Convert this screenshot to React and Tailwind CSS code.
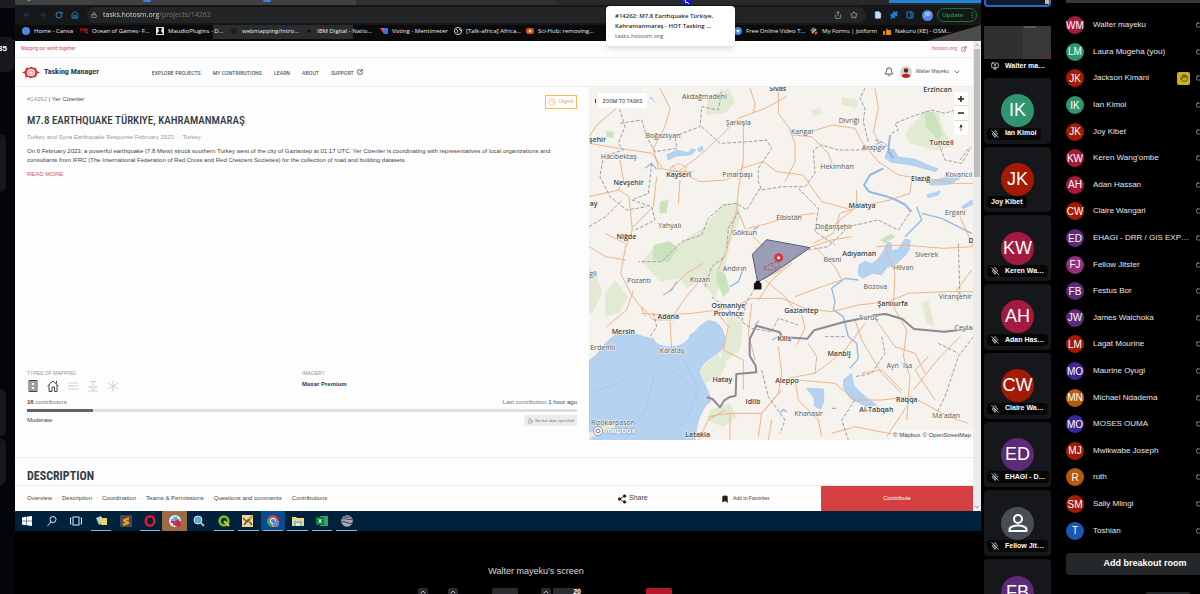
import React from "react";
import {
  ArrowLeft, ArrowRight, RotateCw, House, Lock, Share, Star, FileText, Puzzle, PanelRight,
  EllipsisVertical, ExternalLink, Bell, ChevronDown, ChevronUp, Clock, Timer, Share2, Bookmark,
  MicOff, Hand, Video, SquareArrowOutUpRight, MonitorUp, Asterisk, Waves,
} from "lucide-react";

const NARROW = "font-['Roboto_Condensed','Liberation_Sans_Narrow','Liberation_Sans',sans-serif]";

const colors = {
  crimson: "bg-[#a3193f]",
  green: "bg-[#2f9470]",
  red: "bg-[#a31a05]",
  purple: "bg-[#5c2a77]",
  magenta: "bg-[#95307a]",
  indigo: "bg-[#3d2699]",
  orange: "bg-[#b85a0c]",
  blue: "bg-[#1d55b3]",
};

const participants = [
  ["WM", "Walter mayeku", "crimson"],
  ["LM", "Laura Mugeha (you)", "green"],
  ["JK", "Jackson Kimani", "red", true],
  ["IK", "Ian Kimoi", "green"],
  ["JK", "Joy Kibet", "red"],
  ["KW", "Keren Wang'ombe", "crimson"],
  ["AH", "Adan Hassan", "crimson"],
  ["CW", "Claire Wangari", "red"],
  ["ED", "EHAGI - DRR / GIS EXP…", "purple"],
  ["FJ", "Fellow Jitster", "magenta"],
  ["FB", "Festus Bor", "purple"],
  ["JW", "James Waichoka", "purple"],
  ["LM", "Lagat Mourine", "red"],
  ["MO", "Maurine Oyugi", "indigo"],
  ["MN", "Michael Ndadema", "orange"],
  ["MO", "MOSES OUMA", "indigo"],
  ["MJ", "Mwikwabe Joseph", "red"],
  ["R", "ruth", "orange"],
  ["SM", "Sally Mlingi", "red"],
  ["T", "Toshian", "blue"],
];

const tiles = [
  ["IK", "Ian Kimoi", "green", true],
  ["JK", "Joy Kibet", "red", false],
  ["KW", "Keren Wa…", "crimson", true],
  ["AH", "Adan Has…", "crimson", true],
  ["CW", "Claire Wa…", "red", true],
  ["ED", "EHAGI - D…", "purple", true],
  [null, "Fellow Jit…", null, true],
];

function Tile({ initials, name, color, muted }) {
  return (
    <div className="relative flex items-center justify-center rounded-sm bg-[#15171a]">
      {initials ? (
        <span className={`flex size-[33px] items-center justify-center rounded-full text-[18px] text-white ${colors[color]}`}>
          {initials}
        </span>
      ) : (
        <span className="flex size-[33px] items-center justify-center rounded-full bg-[#484f54]">
          <svg viewBox="0 0 24 24" className="size-6 fill-none stroke-white stroke-2">
            <circle cx="12" cy="8" r="4" />
            <path d="M3.500 20v-1.500c0-2.700 5-4 8.500-4s8.500 1.300 8.500 4V20z" />
          </svg>
        </span>
      )}
      {name && (
        <span className="absolute bottom-1 left-[3px] flex h-3 items-center gap-1 whitespace-nowrap rounded-sm bg-black/70 px-1 text-[7px] font-bold text-white">
          {muted && <MicOff className="mr-0.5 size-2 shrink-0" />}
          {name}
        </span>
      )}
    </div>
  );
}

function Filmstrip() {
  return (
    <aside className="flex w-[67px] shrink-0 flex-col">
      <div className="relative mb-[3px] h-[7px] shrink-0 rounded-b-sm border-2 border-t-0 border-[#2a66d0] bg-[#121a2b]">
        <span className="absolute right-0 top-0 h-1 w-1 bg-[#c9bd8a]" />
      </div>
      <div className="mb-[2px] flex h-[66px] shrink-0 flex-col">
        <div className="h-4 bg-black" />
        <div className="relative flex h-[33px] bg-[#303030]">
          <span className="w-10" />
          <span className="w-7 bg-[#383836]" />
          <span className="absolute left-10 top-0 h-[2px] w-3 bg-[#5b5b5b]" />
          <span className="absolute bottom-0 right-0 h-[2px] w-3 bg-[#5c2c2c]" />
        </div>
        <div className="flex h-[14px] items-center gap-1 whitespace-nowrap pl-[7px] text-[7px] font-bold text-white">
          <MonitorUp className="mr-0.5 size-2 shrink-0" />
          Walter ma…
        </div>
      </div>
      <div className="grid h-[478px] shrink-0 grid-rows-7 gap-[3px]">
        {tiles.map(([i, n, c, m]) => (
          <Tile key={n} initials={i} name={n} color={c} muted={m} />
        ))}
      </div>
      <div className="mt-[3px] grid h-[66px] shrink-0">
        <Tile initials="FB" color="purple" />
      </div>
    </aside>
  );
}

function Participants() {
  return (
    <aside className="flex w-[134px] shrink-0 flex-col overflow-hidden">
      <div className="h-[3px] shrink-0 bg-[#37383b]" />
      <ul className="mt-[9px] grid h-[532px] shrink-0 auto-rows-fr">
        {participants.map(([i, n, c, hand]) => (
          <li key={n} className="flex items-center">
            <span className={`flex size-[18px] shrink-0 items-center justify-center rounded-full text-[10px] text-white ${colors[c]}`}>{i}</span>
            <span className="ml-[9px] w-[94px] shrink-0 whitespace-nowrap text-[8px] text-[#e6e6e6]">{n}</span>
            <span className="-ml-2.5 flex w-3 shrink-0">
              {hand && (
                <span className="flex size-[13px] shrink-0 items-center justify-center rounded-xs bg-[#cbb01c]">
                  <Hand className="size-2 text-[#3a3206]" />
                </span>
              )}
            </span>
            <Video className="ml-[7px] size-2 shrink-0 text-[#b5b5b5]" />
          </li>
        ))}
      </ul>
      <button className="mt-[9px] h-[22px] w-[158px] shrink-0 rounded-sm bg-[#25282b] text-[9px] font-bold text-white">
        Add breakout room
      </button>
      <div className="ml-20 mt-auto h-[2px] w-11 shrink-0 rounded-t bg-[#25282b]" />
    </aside>
  );
}

const bookmarks = [
  ["Home - Canva", <circle key="a" cx="4" cy="4" r="4" fill="#4a8be8" />, "w-[58px]"],
  ["Ocean of Games- F…", <path key="a" d="M0 6V2h2l1 2V2h2v4M6 2h2v4H6z" fill="none" stroke="#c01818" />, "w-[76px]"],
  ["MaudioPlugins - D…", <path key="a" d="M0 0h8v8H0zM2 1l4 0-1 3 2 3H1l2-3z" fill="#dfe5ea" fillRule="evenodd" />, "w-[74px]"],
  ["webmapping/Intro…", <circle key="a" cx="4" cy="4" r="3" fill="#1c1c1c" />, "w-[75px]"],
  ["IBM Digital - Natio…", <circle key="a" cx="4" cy="4" r="2" fill="#151515" />, "w-[75px]"],
  ["Voting - Mentimeter", <g key="a"><path d="M0 1l4 6V1z" fill="#e0457c" /><path d="M4 1h4v6L4 7z" fill="#3f6fe0" /></g>, "w-[74px]"],
  ["[Talk-africa] Africa…", <g key="a"><circle cx="4" cy="4" r="3.600" fill="none" stroke="#cfcfcf" /><path d="M2 2l2 2-1 2M5 2l2 2" stroke="#cfcfcf" fill="none" /></g>, "w-[72px]"],
  ["Sci-Hub: removing…", <g key="a"><rect y="1" width="8" height="6" rx="2" fill="#d44a16" /><circle cx="4" cy="4" r="1.500" fill="#fbe08a" /></g>, "w-[72px]"],
];
const bookmarksRight = [
  ["Free Online Video T…", <g key="a"><circle cx="4" cy="4" r="4" fill="#3b82e8" /><path d="M2 3h4L4 6z" fill="#fff" /></g>, "w-[76px]"],
  ["My Forms | Jotform", <g key="a"><path d="M1 4l3-3" stroke="#3f8cf0" strokeWidth="2" /><path d="M2 6l4-4" stroke="#f5a623" strokeWidth="2" /><path d="M5 7l2-2" stroke="#e4572e" strokeWidth="2" /></g>, "w-[73px]"],
  ["Nakuru (KE) - OSM…", <path key="a" d="M0 4h2v4H0zM3 4l1-3 1 2h3v5H3z" fill="#e58a1a" />, "w-[76px]"],
];

function BookmarkLink({ item }) {
  const [label, icon, w] = item;
  return (
    <a href="#bookmark" className={`flex shrink-0 items-center gap-1 whitespace-nowrap ${w}`}>
      <svg viewBox="0 0 8 8" className="size-2 shrink-0">{icon}</svg>
      {label}
    </a>
  );
}

function BrowserChrome() {
  return (
    <header className="relative flex h-[41px] shrink-0 flex-col overflow-visible bg-[#0b0b0c] font-['Open_Sans',sans-serif]">
      <div className="flex h-[5px] shrink-0 bg-[#28292b]">
        <div className="flex w-[341px] gap-28 bg-[#404143] pl-3">
          <span className="h-px w-1 rounded-b bg-[#5e9b4b]" />
          <span className="h-0.5 w-2 rounded-b bg-[#3c7fe6]" />
          <span className="h-0.5 w-2 rounded-b bg-[#3c7fe6]" />
        </div>
        <div className="w-[200px] bg-[#303133]" />
        <div className="flex-1" />
        <div className="h-[3px] w-[92px] bg-[#2084d8]" />
      </div>
      <div className="flex h-5 shrink-0 items-center bg-[#161718] pl-2 pr-1 text-[#2c82bd]">
        <div className="flex gap-2">
          <button aria-label="Back"><ArrowLeft className="size-2 text-[#1c577f]" /></button>
          <button aria-label="Forward"><ArrowRight className="size-2 text-[#1c577f]" /></button>
          <button aria-label="Reload"><RotateCw className="size-2" strokeWidth={3} /></button>
          <button aria-label="Home page"><House className="size-2" strokeWidth={3} /></button>
        </div>
        <div className="ml-2 flex h-4 flex-1 items-center rounded-full bg-[#232426] px-1">
          <Lock className="size-[6px] shrink-0 text-[#cfcfcf]" />
          <input
            aria-label="Address"
            defaultValue="tasks.hotosm.org/projects/14262"
            className="ml-1.5 min-w-0 flex-1 bg-[linear-gradient(to_right,#ececec_56px,#7a7a7a_56px)] bg-clip-text text-[7px] text-transparent outline-none"
          />
          <Share className="size-2 text-[#b5b5b5]" />
          <Star className="ml-2 mr-1 size-2 text-[#c9c9c9]" />
        </div>
        <FileText className="ml-2 size-2 fill-[#bfdcf8] text-[#bfdcf8]" />
        <Puzzle className="ml-2 size-2 fill-[#2084d8] text-[#2084d8]" />
        <PanelRight className="ml-2 size-2 text-[#2084d8]" strokeWidth={3} />
        <span className="ml-2 flex size-[11px] items-center justify-center rounded-full bg-[#5784e6] text-[5px] text-white">JW</span>
        <button className="ml-1 flex h-[14px] w-10 items-center justify-between rounded-full border border-[#157a2c] pl-1 text-[6px] font-semibold text-[#269a3f]">
          Update
          <EllipsisVertical className="size-2" />
        </button>
      </div>
      <nav className="relative flex flex-1 items-center pb-1 pl-[7px] text-[6px] font-medium text-[#ececec]">
        <span className="absolute left-[198px] top-0 h-3.5 w-[140px] bg-[#2b2c2d]" />
        <svg viewBox="0 0 54 16" className="absolute right-0 top-0 h-4 w-[54px]"><path d="M54 0v16H0z" fill="#4b4b4c" /></svg>
        <div className="relative flex flex-1 items-center">
          {bookmarks.map((b) => <BookmarkLink key={b[0]} item={b} />)}
        </div>
        <div className="relative flex items-center pr-[22px]">
          {bookmarksRight.map((b) => <BookmarkLink key={b[0]} item={b} />)}
        </div>
      </nav>
      <div className="absolute left-[591px] top-1.5 z-10 flex h-10 w-[129px] flex-col justify-center rounded-[4px] bg-white pl-[9px] text-[6px] leading-[10px] text-[#2c2c2c] shadow-md">
        <span className="font-semibold">#14262: M7.8 Earthquake Türkiye,</span>
        <span className="font-semibold">Kahramanmaraş - HOT Tasking …</span>
        <span className="text-[#555]">tasks.hotosm.org</span>
      </div>
      <svg viewBox="0 0 12 6" className="absolute left-[666px] top-0 z-10 h-1.5 w-3">
        <ellipse cx="6" cy="1" rx="5" ry="4" fill="#1616d8" />
        <path d="M4 0l1 3 1-1 2 2" stroke="#fff" fill="none" />
      </svg>
    </header>
  );
}

const major = [
  ["Sivas", 578, 34], ["Erzincan", 1058, 35], ["Tunceli", 1070, 195], ["şehir", 38, 186], ["Kayseri", 281, 291],
  ["Nevşehir", 131, 315], ["Elazığ", 1007, 303], ["Malatya", 831, 385], ["Niğde", 124, 477], ["ay", 26, 379],
  ["Adıyaman", 823, 529], ["Şanlıurfa", 923, 678], ["Osmaniye", 430, 683], ["Province", 430, 708],
  ["Gaziantep", 649, 699], ["Adana", 250, 718], ["Mersin", 115, 763], ["Kilis", 598, 782], ["Manbij", 762, 828],
  ["Hatay", 412, 906], ["Aleppo", 606, 908], ["Idlib", 504, 972], ["Al-Tabqah", 874, 996], ["Raqqa", 965, 967],
  ["Latakia", 338, 1070], ["D", 1158, 490],
];
const minor = [
  ["Akdağmadeni", 358, 56], ["Şarkışla", 460, 135], ["Kangal", 651, 163], ["Divriği", 792, 129], ["Arapgir", 866, 211],
  ["Boğazlıyan", 234, 174], ["Hacıbektaş", 101, 236], ["Pınarbaşı", 457, 291], ["Hekimhan", 756, 268],
  ["Kovancıl", 1121, 291], ["Ergani", 1111, 404], ["Elbistan", 612, 420], ["Doğanşehir", 747, 446],
  ["Göksun", 478, 464], ["Yahyalı", 254, 445], ["Siverek", 1025, 530], ["Besni", 742, 546], ["Andırın", 449, 573],
  ["Hilvan", 955, 571], ["Pozantı", 162, 610], ["gli", 24, 588], ["Kozan", 345, 605], ["Bozova", 871, 626],
  ["Viranşehir", 1111, 657], ["Suruç", 851, 720], ["Ceyla", 1135, 751], ["Erdemli", 53, 810], ["Karataş", 261, 819],
  ["Ayn ʿIsa", 943, 863], ["Khanasir", 671, 1008], ["Ma'adan", 1083, 1014], ["Rizokarpason", 84, 1036],
];

function MapDrawing() {
  return (
    <svg viewBox="12 21 1152 1059" preserveAspectRatio="xMidYMid slice" className="absolute inset-0 size-full font-['Open_Sans',sans-serif]">
      <rect x="-400" y="-400" width="2000" height="2000" fill="#f6f3ee" />
      <g fill="#e3ead4">
        <path d="M370 50l60-25 20 40-30 35-60 5z" />
        <path d="M770 50l50 10-5 25-45-10zM680 90l25-8 5 20-25 5z" />
        <path d="M960 160l60-70 40 10 20 60 25 40-60 10-70-20z" />
        <path d="M170 545l50-55 60 5 30-25 50-30 50-65 50-10 5 50-30 80-20 90-25 70-25-30-20-20-40 20-20-30-60 10z" />
        <path d="M12 560l20 20 20 60-30 60H12zM60 640l30-40 40 50-30 50-40 10z" />
        <path d="M425 700l50 30-10 80-50 40-10-40 25-50z" />
        <path d="M375 990l60-20 20 40-40 30-50-20zM345 870l50-50 30 30-20 40-45 20z" />
        <path d="M1010 670l20-10 20 80-25-10z" />
      </g>
      <g fill="#cbe3bd">
        <path d="M1018 95l30 0 25 70-15 15-35-40z" />
        <path d="M205 495l50-12 25 25-30 40-45-10z" />
        <path d="M225 365l25-6-5 40-22 0z" />
        <path d="M62 152l25 5-2 18-20-4z" />
        <path d="M885 480l35-20 10 12-30 18z" />
        <path d="M395 570l25 10 15 50-20 20-20-40z" />
      </g>
      <g fill="#b5d3f1" stroke="#a3c6ea" strokeWidth="2">
        <path d="M12 842C50 820 60 775 100 762C140 750 160 770 205 776C215 800 240 798 255 802C280 800 310 790 315 765C335 755 340 735 370 722C400 722 415 745 420 775C415 810 400 820 385 828C360 845 345 860 343 875C350 900 370 925 378 962C350 985 335 1020 330 1085H12z" />
        <path d="M245 225l30-15 35 8 10-12 12 4-12 14-45 4-25 12zM338 205l14-6 2 12-12 4z" />
        <path d="M905 215l20-8 15 25 50 5 30 15 40 15-10 8-70-20-60-8-20-12z" />
        <path d="M1030 305l50-12 45 2-30 18-60 2zM1025 345l40-12-5 12-30 8z" />
        <path d="M1130 380l30-20 4 12-30 14z" />
        <path d="M822 555l18-12 20 8 20-14 20-32 8-18 12 2-2 24 22-6 20-30 16 4-4 30-14 18-30 28-22 4-16 24-26-6-30 16-14-10z" />
        <path d="M665 925l50 2 2 35-10 25-18-8-2-25z" />
        <path d="M775 900l25-20 5 35 30 30 40 30-30 5-50-25-18-30z" />
      </g>
      <path d="M112 1025l-30 22-60 24-10 9V1058l40-18z" fill="#e9eddb" />
      <path d="M280 800l60 130-30 80-60 70M200 820l60 50 60 50M12 940l90-30 60-60M120 1080l60-90 30-110" fill="none" stroke="#9fc3e6" strokeWidth="2" />
      <g fill="none" stroke="#8fb9e6" strokeWidth="4" strokeLinejoin="round">
        <path d="M915 165l-5 50 15 20M895 265l-40 20-18 30 15 20 45 12 30 10 35 18 15 20" strokeWidth="6" />
        <path d="M995 380l15 40-30 30-20 20M1010 400l60 15 60 30 30 15" />
        <path d="M820 600l-40-5-40 30 10 40-5 25 30 20 15 60 25 20 5 45-25 30" />
        <path d="M180 265l20-15 15 18M435 620l25-15 15-40M235 645l25-15 15-25M520 440l-15 10" />
        <path d="M510 735l12-12M560 780l30-15M585 1000l10-12 10 8M740 985h14" />
      </g>
      <g fill="none" stroke="#efb389" strokeWidth="3" strokeLinejoin="round">
        <path d="M12 170L40 130L95 85M225 25l30 60-15 55-35 65 15 60 60 10 60-45 60-55 60-60 80-30 65-35" />
        <path d="M495 25l15 45-5 30M580 25l0 75 30 40 20 50 0 55-30 60M475 140l0 100-15 90-5 60-30 120-25 60" />
        <path d="M12 190l90 15 100 15 30 45M285 275l60 30 80-5 45-35 65-20 40 30 80 10 20 30 35 50 75 20 60-15" />
        <path d="M620 165l60 5 50 50 10 30M680 155l60-20 70 10 20 40 50 60 60 40 60 10 60 5 40 10 70 0 55-30" />
        <path d="M870 25l10 60-15 70 25 45M980 300l-5 40-60 20-90 20-60 20-20 60-60 30" />
        <path d="M12 350l90-20 30 20 10 100-20 50-15 80 30 60 30 40 15 30M105 240l10 60-15 30M215 290l-10 90-60 60" />
        <path d="M60 460l60 30M12 500l50 30 60 10M285 300l-5 70M460 395l20 50 60 60" />
        <path d="M690 400l-80 10-60 20-60 15M815 330v50l-50 40-20 30M530 600l60-30 60-60 90-30 60-10" />
        <path d="M690 500l60 60 20 40-60 20-80 30M1125 410l40 90-90 5-120-10-80 5M900 500l30 80-5 100 40 70-10 80 20 60-10 130" />
        <path d="M170 700l70 5 80-5 80-10 70-20 30-15 90 0 70 30 80 10 80-20 90-10 60-25 110-5 100 0 80 10" />
        <path d="M245 640l60-60 50-30M270 700l30-45 50-60M255 725l5 80M145 630l-20 60-60 50M170 680l35 40 60 0" />
        <path d="M400 700l30 40-15 70 60 30 0 90M500 670l-10 90 20 80M580 800l10 80-10 60-50 60-100 0-60 10" />
        <path d="M650 705l10 40-25 50M690 880l40-30 50-40 60-80M690 880l-30 5-50 10M670 790l25 40-5 50M630 900l10 60 60 60 10 50" />
        <path d="M640 900l110 10 60 50 80 0 90-10 110 60 60 20M810 720l20 60 60 100 60 60M880 730l50 70 60 20 30 60M1125 770l-60 60-80 100" />
        <path d="M590 930l-60 70-10 70M560 1020l-10 60M340 1080l30-60 50-30M435 1000l0 80M1130 650l-15-20 45-60M830 880l60-10 60 60M1050 960l-60-90 40-40" />
        <path d="M740 1060l70-20 100 20 60 0M965 980l-60 90M520 660l40-60 60-50M540 600l60 50 30 40" />
      </g>
      <g fill="none" stroke="#e89c6a" strokeWidth="2"><path d="M255 265l25-15 25 12-10 20-30 5zM265 275h60M262 255l30 40" /></g>
      <g fill="none" stroke="#a09ca8" strokeWidth="3" strokeDasharray="11 5">
        <path d="M60 40l45 50 15 50-20 50 15 20-60 20-10 60 30 60 50 40 60-10M105 130l65-10 15 50 25 45 65-10-5-40M265 170l80-30 5-60 50 10 10-60" />
        <path d="M350 140l55 50 90-5 50-5 15 25-40 60 0 40 10 25 60-10 70 0 30-40-5-70 25-15 50 15 80 0 50-25" />
        <path d="M850 185l-15-60 5-40-15-30 15-30M870 180l30 10 20 30M1060 190l20 50 50 10 30-50M1125 240l30-40M920 160l20-10-10-20 50-20 60-20 40 10 60-20" />
        <path d="M525 325l-40 65-30-20-40 5-45 40-20 50-60 20-60 60-70 0M200 250l-10 90-50 20 60 20 10 40-60 30" />
        <path d="M12 440l50-30 50-50M640 325l60 60-10 70 60 40M670 510l60-10 60-60 90-20 60 30 40-60M460 395l-30 50-5 60" />
        <path d="M360 620l20-60 40-30M510 625l-25 40-15 60 30 20 60 10 20-40 60 20M1120 490l5 160M205 700l10 40-20 30M380 650l90 70" />
        <path d="M720 770l60 0M890 770l10 50-40 60-50 10M1165 770l-45 60-40 120-30 60M1060 790l60 30M530 870l20 80 50 70-15 40M810 960l-40 60 20 60" />
      </g>
      <path d="M365 962l18 5 22 25 12-20 15-10 20-5 2-65 60-5-2-20-18-30 0-50 15-30 5-10 70 20 8 14 75 5 20-25 90-25 60-12 30-8 35-4 50 15 35 30 90 8 90-10 50-10" fill="none" stroke="#8d8894" strokeWidth="6" strokeLinejoin="round" transform="translate(0 -10)" />
      <path d="M545 479l130 24-95 66-62 38-16-84z" fill="#7c80a0" fillOpacity=".75" stroke="#57587c" strokeWidth="3" />
      <g stroke="#9a9ebb" strokeWidth="1">
        {Array.from({ length: 8 }, (_, i) => <path key={i} d={`M${515 + i * 16} ${500 + i}V${590 - i * 9}`} />)}
      </g>
      <g fill="none" stroke="#c0405e" strokeWidth="3" strokeDasharray="6 4"><path d="M540 560l35-15 10 12-20 14-30-4zM555 548l20 20" /></g>
      <circle cx="581" cy="533" r="9" fill="#fff" stroke="#d8363f" strokeWidth="9" />
      <path d="M508 610h20v17h-20zM513 610v-6h10v6" fill="#111" stroke="#111" strokeWidth="3" />
      <g textAnchor="middle" fontSize="21" fill="#565656" stroke="#f8f6f2" strokeWidth="3" paintOrder="stroke">
        {minor.map(([t, x, y]) => <text key={t} x={x} y={y}>{t}</text>)}
      </g>
      <g textAnchor="middle" fontSize="21" fontWeight="600" fill="#3f3f3f" stroke="#f8f6f2" strokeWidth="3" paintOrder="stroke">
        {major.map(([t, x, y]) => <text key={t} x={x} y={y}>{t}</text>)}
      </g>
    </svg>
  );
}

function MapPanel() {
  return (
    <section aria-label="Map" className="relative h-[353px] w-[384px] shrink-0 overflow-hidden">
      <MapDrawing />
      <span className="absolute left-1.5 top-3 h-1 w-px bg-[#333]" />
      <button className={`absolute left-[9px] top-1.5 h-[15px] w-[49px] bg-white text-[6px] text-[#444] ${NARROW}`}>ZOOM TO TASKS</button>
      <svg viewBox="0 0 8 8" className="absolute left-[61px] top-2.5 size-1.5 fill-none stroke-[#9db8d6]"><path d="M0 3V1h3M1 1l6 6" /></svg>
      <div className="absolute right-[5px] top-[5px] flex w-[14px] flex-col divide-y divide-[#ddd] rounded-xs bg-white">
        <button aria-label="Zoom in" className="flex h-[14px] items-center justify-center"><svg viewBox="0 0 6 6" className="size-1.5 stroke-[#222] stroke-[1.500]"><path d="M0 3h6M3 0v6" /></svg></button>
        <button aria-label="Zoom out" className="flex h-[15px] items-center justify-center"><svg viewBox="0 0 6 6" className="size-1.5 stroke-[#222] stroke-[1.500]"><path d="M0 3h6" /></svg></button>
        <button aria-label="Reset north" className="flex h-[14px] items-center justify-center"><svg viewBox="0 0 6 10" className="h-2 w-1.5"><path d="M1 4.500L3 0l2 4.500z" fill="#222" /><path d="M1 5.500L3 10l2-4.500z" fill="#bbb" /></svg></button>
      </div>
      <div className="absolute bottom-1 left-1 flex items-center gap-0.5 text-[8px] font-bold leading-[8px] text-white [text-shadow:0_0_2px_#5d6a78]">
        <svg viewBox="0 0 10 10" className="size-2.5"><circle cx="5" cy="5" r="4.500" fill="#fff" stroke="#8a949c" /><circle cx="5" cy="5" r="2" fill="none" stroke="#6c7780" /></svg>
        mapbox
      </div>
      <div className="absolute bottom-0 right-0 flex h-2.5 items-center gap-0.5 bg-white/50 px-0.5 text-[6px] text-[#444]">
        <a href="#mapbox">© Mapbox</a>
        <a href="#osm">© OpenStreetMap</a>
      </div>
    </section>
  );
}

function ProjectPage() {
  const tabs = ["Overview", "Description", "Coordination", "Teams & Permissions", "Questions and comments", "Contributions"];
  return (
    <div className="flex shrink-0 bg-[#fdfdfd] text-[#444]">
      <main className="min-w-0 flex-1">
        <div className="flex h-[17px] items-center justify-between border-b border-[#ececec] px-1.5 text-[5px] text-[#d3595c]">
          <span className={NARROW}>Mapping our world together</span>
          <a href="#hotosm" className="flex items-center gap-1">hotosm.org <ExternalLink className="size-1.5" strokeWidth={3} /></a>
        </div>
        <div className="flex h-[29px] items-center border-b border-[#ececec] pl-[7px] pr-3">
          <svg viewBox="0 0 36 26" className="h-[13px] w-[18px]">
            <path d="M8 3L14 4 18 1 22 3 28 4 30 10 36 13 30 16 28 22 22 23 16 25 14 22 7 23 6 16 0 13 6 10z" fill="#d8373f" />
            <ellipse cx="18" cy="13" rx="8" ry="7" fill="#fff" />
            <ellipse cx="18" cy="13" rx="5" ry="3.500" fill="none" stroke="#d8373f" strokeWidth="1.500" />
          </svg>
          <span className={`ml-1 text-[8px] font-bold text-[#333b45] ${NARROW}`}>Tasking Manager</span>
          <nav className={`ml-[53px] flex flex-1 gap-3 text-[6px] text-[#444] ${NARROW}`}>
            <a href="#explore">EXPLORE PROJECTS</a>
            <a href="#mine">MY CONTRIBUTIONS</a>
            <a href="#learn">LEARN</a>
            <a href="#about">ABOUT</a>
            <a href="#support" className="flex items-center gap-[3px]">SUPPORT <SquareArrowOutUpRight className="size-1.5" strokeWidth={3} /></a>
          </nav>
          <button aria-label="Notifications"><Bell className="size-2.5 text-[#333]" /></button>
          <button className="ml-1.5 flex items-center gap-1 text-[5px] text-[#555]">
            <svg viewBox="0 0 12 12" className="size-3"><circle cx="6" cy="6" r="6" fill="#ddd3cc" /><circle cx="6" cy="4.500" r="2.200" fill="#4a2c22" /><path d="M1.500 10c1-3 8-3 9 0-2 2.600-7 2.600-9 0z" fill="#c3202e" /></svg>
            Walter Mayeku
            <ChevronDown className="size-2 text-[#333]" />
          </button>
        </div>
        <div className="flex">
          <section className="flex min-w-0 flex-1 flex-col pb-[14px] pl-3 pr-3 pt-2 text-[6px]">
            <div className="flex items-start justify-between">
              <span className="leading-[8px]"><span className="text-[#999]">#14262</span> | Yer Cizenler</span>
              <span className="flex h-[14px] w-8 items-center justify-center gap-0.5 border border-[#f4ba5c] text-[5px] text-[#f0975a]"><Clock className="size-2 text-[#f4ba5c]" />Urgent</span>
            </div>
            <h1 className={`mt-[3px] text-[11px] font-medium leading-[18px] text-[#333b45] ${NARROW}`}>M7.8 EARTHQUAKE TÜRKIYE, KAHRAMANMARAŞ</h1>
            <p className="mt-[3px] leading-[8px] text-[#929aa5]">Turkey and Syria Earthquake Response February 2023 &nbsp;·&nbsp; Turkey</p>
            <p className="mt-1.5 leading-[9px]">
              On 6 February 2023, a powerful earthquake (7.8 Mww) struck southern Turkey west of the city of Gaziantep at 01:17 UTC. Yer Cizenler is coordinating with representatives of local organizations and consultants from IFRC (The International Federation of Red Cross and Red Crescent Societies) for the collection of road and building datasets.
            </p>
            <a href="#more" className="mt-1 leading-[10px] text-[#d3595c]">READ MORE</a>
            <div className="mt-auto grid grid-cols-2">
              <div>
                <h2 className="text-[5px] font-medium leading-[8px] text-[#8a94a5]">TYPES OF MAPPING</h2>
                <div className="mt-[3px] flex items-center gap-2 text-[#cfcfcf]">
                  <svg viewBox="0 0 12 12" className="size-3 fill-none stroke-[#444]"><path d="M2 .5h8v11H2zM6 1v2M6 5v2M6 9v2M4 1v10M8 1v10" /></svg>
                  <svg viewBox="0 0 12 12" className="size-3 fill-none stroke-[#444]"><path d="M.5 6L6 1l5.500 5M2 5v6.500h3V7h2.500v4.500H10V5M9.500 3.500V1" /></svg>
                  <Waves className="size-3" />
                  <svg viewBox="0 0 12 12" className="size-3 fill-none stroke-[#cfcfcf]"><path d="M3 1.500h6M6 1.500v5M1 7h10M3 7l3 3 3-3M1 11h10" /></svg>
                  <svg viewBox="0 0 12 12" className="size-3 fill-none stroke-[#cfcfcf]"><path d="M6 .5v11M1 3l10 6M11 3L1 9" /></svg>
                </div>
              </div>
              <div>
                <h2 className="text-[5px] font-medium leading-[8px] text-[#8a94a5]">IMAGERY</h2>
                <p className="mt-[3px] font-bold leading-[8px] text-[#3a3a4a]">Maxar Premium</p>
              </div>
            </div>
            <div className="mt-1.5 flex justify-between leading-[8px] text-[#777]">
              <span><b className="text-[#444]">16</b> contributors</span>
              <span>Last contribution <span className="text-[#444]">1 hour ago</span></span>
            </div>
            <div className="mt-[3px] h-[3px] bg-[#dfdfe1]"><div className="h-full w-[12%] bg-[#62626e]" /></div>
            <div className="mt-[3px] flex items-center justify-between">
              <span className="font-medium">Moderate</span>
              <span className="flex h-[11px] w-[53px] items-center justify-center gap-0.5 bg-[#ececec] text-[4px] text-[#777]"><Timer className="size-1.5" />No due date specified</span>
            </div>
          </section>
          <MapPanel />
        </div>
        <h2 className={`mt-[17px] border-y border-[#ececec] pl-3 pt-[9px] text-[12px] font-bold leading-[18px] text-[#333b45] ${NARROW}`}>DESCRIPTION</h2>
        <div className="flex h-[25px] items-center pl-3 text-[6px]">
          <nav className="flex flex-1 gap-1">
            {tabs.map((t, i) => (
              <React.Fragment key={t}>
                {i > 0 && <span className="text-[#aaa]">·</span>}
                <a href="#section">{t}</a>
              </React.Fragment>
            ))}
          </nav>
          <button className="flex w-[104px] items-center gap-0.5 text-[7px]"><Share2 className="size-2.5 fill-[#222] text-[#222]" />Share</button>
          <button className="flex w-[100px] items-center gap-1 text-[5px]"><Bookmark className="size-2 fill-[#222] text-[#222]" />Add to Favorites</button>
          <button className="h-full w-[152px] bg-[#d43f3f] text-[6px] font-medium text-white">Contribute</button>
        </div>
      </main>
      <div className="flex w-2 shrink-0 flex-col items-center bg-[#ececec]">
        <span className="flex h-2 items-center text-[#555]"><ChevronUp className="size-1.5" /></span>
        <span className="h-32 w-[6px] bg-[#bdbdbd]" />
        <span className="mt-auto flex h-2 items-center text-[#222]"><ChevronDown className="size-1.5" /></span>
      </div>
    </div>
  );
}

const apps = [
  ["Start", <g key="i" fill="#fff"><path d="M1 2.500l4-.7v4H1zM5.500 1.700L11 1v4.800H5.500zM1 6.300h4v4l-4-.7zM5.500 6.300H11V11l-5.500-.7z" /></g>],
  ["Search", <g key="i" fill="none" stroke="#dfe6ec"><circle cx="7" cy="4.500" r="3" /><path d="M5 7l-3.500 4" /></g>],
  ["Task view", <g key="i" fill="none" stroke="#dfe6ec"><rect x="3" y="2" width="6" height="8" /><path d="M1.500 3h-1v6h1M10.500 3h1v6h-1" /></g>],
  ["Notes", <g key="i"><path d="M1 3l5-2 3 5-5 4z" fill="#a9d8c5" /><path d="M5 3h7v7H6z" fill="#ecd759" /></g>, true],
  ["Editor", <g key="i"><rect width="12" height="12" rx="1" fill="#4a4a4a" /><path d="M3 4.500L9 2v2.500L6 5.600l3 1V9l-6 2V8.500l3-1-3-1z" fill="#f89820" /></g>],
  ["Opera", <ellipse key="i" cx="6" cy="6" rx="4.300" ry="4.700" fill="none" stroke="#e21b30" strokeWidth="2.400" />, true],
  ["Slack", <g key="i"><circle cx="6" cy="6" r="6" fill="#f2eeee" /><g strokeWidth="1.800" strokeLinecap="round"><path d="M5 2.500V5H2.500" stroke="#36c5f0" fill="none" /><path d="M7 2.500V5h2.500" stroke="#2eb67d" fill="none" /><path d="M5 9.500V7H2.500" stroke="#e01e5a" fill="none" /></g><circle cx="8.800" cy="8.500" r="3.200" fill="#d81e4a" /></g>, false, "bg-[#9b6b43]"],
  ["Explorer search", <g key="i"><circle cx="5" cy="5" r="4" fill="#57a9e0" stroke="#cfe3f2" /><path d="M3 4l3 1-1 2z" fill="#73c05b" /><path d="M8 8l3 3" stroke="#c9b37c" strokeWidth="2" /></g>],
  ["QGIS", <g key="i"><circle cx="6" cy="6" r="4.300" fill="none" stroke="#7db52a" strokeWidth="2.800" /><path d="M6 6l5 5" stroke="#c6cf2f" strokeWidth="2.400" /></g>, true],
  ["JOSM", <g key="i"><rect width="11" height="12" fill="#e8d9a0" /><path d="M1 3l4 4 5-6M2 10l4-5 4 5" stroke="#7b5523" fill="none" strokeWidth="1.500" /><path d="M8 1l3 1-4 6z" fill="#f1a51e" /></g>, true],
  ["Chrome", <g key="i"><circle cx="6" cy="6" r="5.800" fill="#de4a3b" /><path d="M6 6L1 3a6 6 0 0 0 4 9z" fill="#3aa757" /><path d="M6 6h5.800A6 6 0 0 1 5 11.800z" fill="#f5c526" /><circle cx="6" cy="6" r="2.700" fill="#4285f4" stroke="#fff" /><circle cx="9" cy="9" r="3" fill="#6485dc" /></g>, true, "bg-[#0a4a8e]"],
  ["Files", <g key="i"><path d="M0 2h4l1 1h7v8H0z" fill="#f5d978" /><path d="M2 6h8v5H2z" fill="#6fc4e8" /><path d="M4 8h4v3H4z" fill="#f5e6ad" /></g>, true],
  ["Excel", <g key="i"><rect x="4" y="1" width="8" height="10" fill="#2ea463" /><rect y="2" width="8" height="8" fill="#107c41" /><path d="M2.500 4l3 4M5.500 4l-3 4" stroke="#fff" /></g>, true],
  ["Earth", <g key="i"><circle cx="6" cy="6" r="5.800" fill="#a9adb2" /><path d="M1 4c3-2 6 2 10 0M1 7c3-2 6 3 10 1M3 2c2-1 4 1 6 0" stroke="#3a4653" fill="none" strokeWidth="1.200" /></g>, true],
];

function Taskbar() {
  return (
    <nav aria-label="Taskbar" className="h-5 shrink-0 bg-[#01223c]">
      <div className="grid h-full w-[344px] grid-cols-14">
        {apps.map(([label, icon, open, bg]) => (
          <button key={label} aria-label={label} className={`relative flex justify-center pt-1 ${bg || ""}`}>
            <svg viewBox="0 0 12 12" className="size-3">{icon}</svg>
            {open && <span className="absolute inset-x-0.5 bottom-0 h-px bg-[#8fb4d0]" />}
          </button>
        ))}
      </div>
    </nav>
  );
}

function LeftRail() {
  return (
    <div className="flex w-[15px] shrink-0 flex-col bg-[#04050a]">
      <div className="h-2 w-[15px] bg-[#1c1d20]" />
      <div className="mt-[29px] flex h-[35px] w-[14px] justify-end overflow-hidden rounded-r-md bg-[#16171b] pr-[7px] pt-1.5 text-[8px] font-bold leading-[12px] text-white">35</div>
      <div className="mt-[62px] h-[58px] w-1.5 rounded-r-md bg-[#16171b]" />
      <div className="mt-[197px] h-[47px] w-1.5 rounded-r-md bg-[#16171b]" />
      <div className="mt-[2px] h-[47px] w-1.5 rounded-r-md bg-[#16171b]" />
    </div>
  );
}

function CallControls() {
  return (
    <footer className="flex min-h-0 flex-1 flex-col bg-black">
      <p className="mt-[34px] pl-[76px] text-center text-[9px] leading-[12px] text-[#dcdcdc]">Walter mayeku's screen</p>
      <div className="mt-auto flex h-1.5 items-start overflow-hidden pl-[403px] text-white">
        <button aria-label="Microphone options" className="h-1.5 w-2.5 overflow-hidden rounded-t-xs bg-[#2b2c30]"><ChevronUp className="ml-px size-2" /></button>
        <button aria-label="Camera options" className="ml-5 h-1.5 w-2.5 overflow-hidden rounded-t-xs bg-[#2b2c30]"><ChevronUp className="ml-px size-2" /></button>
        <span className="ml-[34px] h-1.5 w-[26px] rounded-t-xs bg-[#2b2c30]" />
        <button aria-label="Hand options" className="ml-[23px] h-1.5 w-2.5 overflow-hidden rounded-t-xs bg-[#2b2c30]"><ChevronUp className="ml-px size-2" /></button>
        <span className="ml-0.5 h-1.5 w-7 rounded-t-xs bg-[#2b2c30] text-right text-[7px] font-bold leading-[7px]">20</span>
        <span className="ml-[65px] h-1.5 w-[26px] rounded-t-xs bg-[#b3192b]" />
      </div>
    </footer>
  );
}

export default function App() {
  return (
    <div className="flex h-screen overflow-hidden bg-black font-['Liberation_Sans',sans-serif]">
      <LeftRail />
      <div className="flex min-w-0 flex-1 flex-col">
        <BrowserChrome />
        <ProjectPage />
        <Taskbar />
        <CallControls />
      </div>
      <div className="ml-[3px] mr-[15px] flex"><Filmstrip /></div>
      <Participants />
    </div>
  );
}
